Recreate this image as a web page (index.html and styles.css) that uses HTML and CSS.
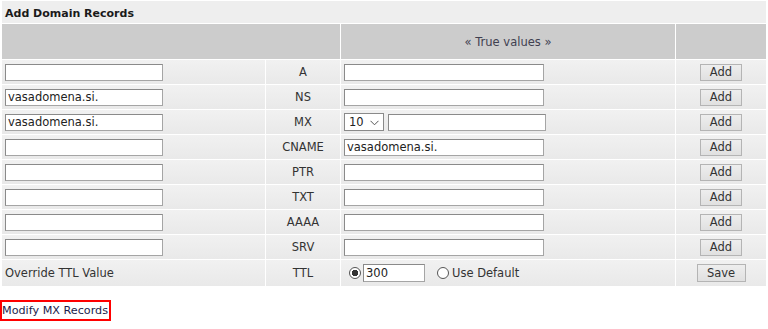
FILE: index.html
```html
<!DOCTYPE html>
<html lang="en">
<head>
  <meta charset="UTF-8" />
  <title>Add Domain Records</title>
  <link rel="stylesheet" href="styles.css">
</head>
<body>
  <div class="panel">
    <table class="records">
      <colgroup>
        <col class="c-name">
        <col class="c-type">
        <col class="c-value">
        <col class="c-action">
      </colgroup>
      <tr class="title">
        <th colspan="4">Add Domain Records</th>
      </tr>
      <tr class="head">
        <td colspan="2"></td>
        <td class="center">&laquo; True values &raquo;</td>
        <td></td>
      </tr>
      <tr>
        <td><input type="text" class="name"></td>
        <td class="center">A</td>
        <td><input type="text" class="value"></td>
        <td class="center"><button>Add</button></td>
      </tr>
      <tr>
        <td><input type="text" class="name" value="vasadomena.si."></td>
        <td class="center">NS</td>
        <td><input type="text" class="value"></td>
        <td class="center"><button>Add</button></td>
      </tr>
      <tr>
        <td><input type="text" class="name" value="vasadomena.si."></td>
        <td class="center">MX</td>
        <td>
          <div class="mx">
            <span class="select">
              <select><option>10</option></select>
              <svg class="chev" width="9" height="6" viewBox="0 0 9 6"><path d="M0.5 0.8 L4.5 4.8 L8.5 0.8" fill="none" stroke="#555" stroke-width="1"/></svg>
            </span>
            <input type="text" class="mxhost">
          </div>
        </td>
        <td class="center"><button>Add</button></td>
      </tr>
      <tr>
        <td><input type="text" class="name"></td>
        <td class="center">CNAME</td>
        <td><input type="text" class="value" value="vasadomena.si."></td>
        <td class="center"><button>Add</button></td>
      </tr>
      <tr>
        <td><input type="text" class="name"></td>
        <td class="center">PTR</td>
        <td><input type="text" class="value"></td>
        <td class="center"><button>Add</button></td>
      </tr>
      <tr>
        <td><input type="text" class="name"></td>
        <td class="center">TXT</td>
        <td><input type="text" class="value"></td>
        <td class="center"><button>Add</button></td>
      </tr>
      <tr>
        <td><input type="text" class="name"></td>
        <td class="center">AAAA</td>
        <td><input type="text" class="value"></td>
        <td class="center"><button>Add</button></td>
      </tr>
      <tr>
        <td><input type="text" class="name"></td>
        <td class="center">SRV</td>
        <td><input type="text" class="value"></td>
        <td class="center"><button>Add</button></td>
      </tr>
      <tr class="ttl">
        <td class="label">Override TTL Value</td>
        <td class="center">TTL</td>
        <td>
          <div class="ttl-opts">
            <input type="radio" name="ttl" checked>
            <input type="text" class="ttlval" value="300">
            <label><input type="radio" name="ttl">Use Default</label>
          </div>
        </td>
        <td class="center"><button class="save">Save</button></td>
      </tr>
    </table>
  </div>

  <p class="links"><a href="#" class="mxlink">Modify MX Records</a></p>
</body>
</html>
```

FILE: styles.css
```css
body {
  margin: 0;
  font-family: "DejaVu Sans", Verdana, sans-serif;
  font-size: 11.5px;
  color: #333;
  background: #fff;
}

.panel {
  padding: 0 1px;
}

.records {
  width: 100%;
  table-layout: fixed;
  border-collapse: separate;
  border-spacing: 1px;
}

.c-name { width: 263px; }
.c-type { width: 74px; }
.c-value { width: 334px; }

.records td,
.records th {
  padding: 0 3px;
  height: 24px;
  background: linear-gradient(to bottom, #f1f1f1, #e9e9e9);
}

.records .center {
  text-align: center;
}

.title th {
  text-align: left;
  font-size: 11px;
  font-weight: bold;
  color: #1a1a1a;
  height: 20px;
  padding-top: 2px;
  background: #eeeeee;
}

.head td {
  height: 35px;
  background: #cccccc;
  color: #404050;
}

.ttl td {
  height: 26px;
}

input[type="text"] {
  box-sizing: border-box;
  height: 17px;
  margin: 0;
  padding: 0 2px;
  border: 1px solid #a5a5a5;
  border-top-color: #8a8a8a;
  border-left-color: #8a8a8a;
  background: #fff;
  font: inherit;
  color: #222;
  display: block;
}

.name { width: 158px; }
.value { width: 200px; }
.mxhost { width: 158px; }
.ttlval { width: 62px; height: 18px !important; }

.mx {
  display: flex;
  align-items: center;
  gap: 4px;
}

.select {
  position: relative;
  display: block;
}

.select select {
  appearance: none;
  -webkit-appearance: none;
  box-sizing: border-box;
  width: 40px;
  height: 18px;
  margin: 0;
  padding: 0 0 0 4px;
  border: 1px solid #8a8a8a;
  border-radius: 0;
  background: #fff;
  font: inherit;
  color: #222;
  display: block;
}

.chev {
  position: absolute;
  right: 5px;
  top: 7px;
}

.ttl-opts {
  display: flex;
  align-items: center;
}

input[type="radio"] {
  appearance: none;
  -webkit-appearance: none;
  box-sizing: border-box;
  width: 12px;
  height: 12px;
  margin: 0 2px 0 5px;
  border: 1px solid #555;
  border-radius: 50%;
  background: #fff;
}

input[type="radio"]:checked {
  background: radial-gradient(circle, #333 0 3px, #fff 3.5px);
}

.ttl-opts label {
  display: flex;
  align-items: center;
  margin-left: 12px;
}

.ttl-opts label input {
  margin: 0 3px 0 0;
}

button {
  box-sizing: border-box;
  width: 42px;
  height: 17px;
  margin: 0;
  padding: 0;
  border: 1px solid #b4b4b4;
  background: linear-gradient(to bottom, #eeeeee, #e0e0e0);
  font: inherit;
  color: #333;
  vertical-align: middle;
}

button.save {
  width: 49px;
  height: 18px;
}

.links {
  margin: 13px 0 0 0;
}

.mxlink {
  display: inline-block;
  padding: 2px 1px 2px 0;
  border: 2px solid #ff0000;
  font-size: 11.2px;
  color: #1c1c4c;
  text-decoration: none;
}
```
